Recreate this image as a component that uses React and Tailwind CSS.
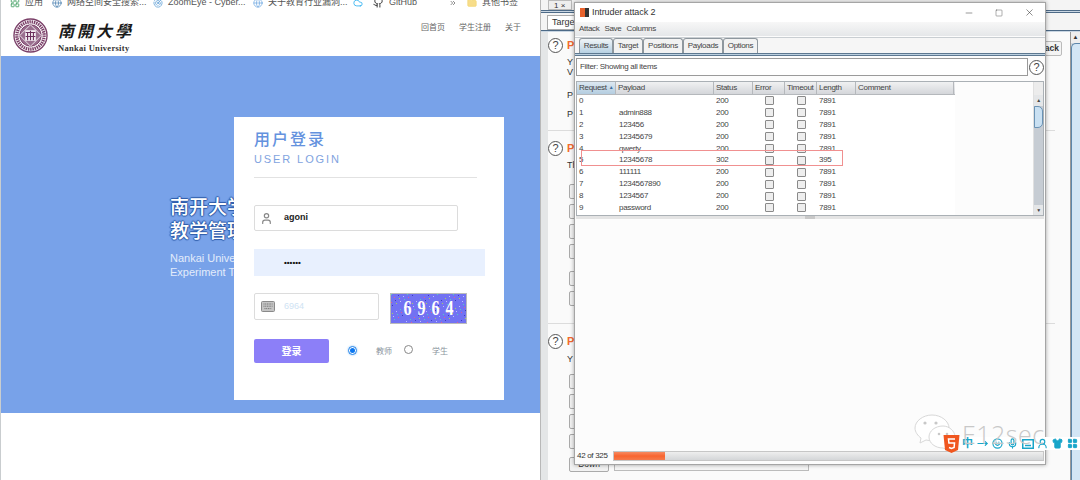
import React from "react";
import { Smile, Mic, UserRound, Shirt, LayoutGrid, Folder, Github, Cloud, Globe, Radar, ChevronsRight, User, Minus, Square, X, MoveRight } from "lucide-react";

const SANS = "font-['Liberation_Sans','Noto_Sans_CJK_SC',sans-serif]";

function Bookmark({ icon, label, w }) {
  return (
    <div className={"flex items-center gap-[5px] shrink-0 " + w}>
      {icon}
      <span className="text-[9px] text-[#555] whitespace-nowrap leading-none">{label}</span>
    </div>
  );
}

function Seal() {
  return (
    <svg width="35" height="35" viewBox="0 0 36 36" className="shrink-0">
      <circle cx="18" cy="18" r="17" fill="#fff" stroke="#7a3f68" strokeWidth="1.4" />
      <circle cx="18" cy="18" r="14" fill="none" stroke="#7a3f68" strokeWidth="3.400" strokeDasharray="1.5 0.8" />
      <circle cx="18" cy="18" r="11" fill="#9a6f8f" stroke="#7a3f68" strokeWidth="1" />
      <path d="M7 18 L18 7 L29 18 L18 29 Z" fill="none" stroke="#fff" strokeWidth="0.800" />
      <rect x="12.500" y="12.500" width="11" height="11" fill="#f3ecf1" />
      <path d="M13 15h10M15 15v8M18 13v10M21 15v8M13 19h10" stroke="#6b2f5c" strokeWidth="1.100" />
    </svg>
  );
}

function KeyboardIcon() {
  return (
    <svg width="14" height="11" viewBox="0 0 14 11">
      <rect x="0.500" y="0.500" width="13" height="10" rx="1" fill="#c4c4c4" stroke="#8a8a8a" />
      <path d="M2.500 3h9M2.500 5.200h9M3.500 7.600h7" stroke="#707070" strokeWidth="1" strokeDasharray="1 0.700" />
    </svg>
  );
}

const noise = Array.from({ length: 120 }, (_, i) => ({
  x: (i * 37) % 76,
  y: (i * 23) % 30,
  c: ["#4fd0c0", "#e05a9a", "#3a3ac0", "#a8d060", "#c0c0ff"][i % 5],
}));

function Captcha() {
  return (
    <div className="relative ml-[11px] w-[77px] h-[31px] border border-[#bbb] bg-[#7272f2] overflow-hidden">
      <svg width="76" height="30" className="absolute left-0 top-0">
        {noise.map((n, i) => <rect key={i} x={n.x} y={n.y} width="1" height="1" fill={n.c} />)}
      </svg>
      <div className="relative h-full flex items-center justify-center gap-[6px] text-white font-bold text-[16px] leading-none font-['Liberation_Serif',serif] scale-y-125">
        <span>6</span><span>9</span><span>6</span><span>4</span>
      </div>
    </div>
  );
}

function LoginCard() {
  return (
    <div className="absolute left-[233px] top-[61px] w-[270px] h-[283px] bg-white pl-[20px] pt-[13px]">
      <div className="text-[16px] leading-[20px] tracking-[2px] font-medium text-[#6492de]">用户登录</div>
      <div className="mt-[2px] text-[11px] leading-[14px] tracking-[1.9px] font-medium text-[#7fa3e0]">USER LOGIN</div>
      <div className="mt-[11px] w-[223px] h-px bg-[#e2e2e2]" />
      <div className="mt-[27px] w-[204px] h-[26px] rounded-[2px] border border-[#dcdcdc] flex items-center pl-[5px]">
        <User size={13} className="text-[#888]" strokeWidth={2.2} />
        <span className="ml-[11px] text-[9px] font-bold text-[#222]">agoni</span>
      </div>
      <div className="mt-[18px] w-[231px] h-[27px] bg-[#e8f0fe] flex items-center pl-[30px]">
        <span className="text-[8px] font-bold text-[#111] leading-none">••••••</span>
      </div>
      <div className="mt-[17px] flex items-start">
        <div className="w-[125px] h-[27px] rounded-[2px] border border-[#dcdcdc] flex items-center pl-[6px]">
          <KeyboardIcon />
          <span className="ml-[9px] text-[9px] text-[#cfe3f3]">6964</span>
        </div>
        <Captcha />
      </div>
      <div className="mt-[15px] flex items-center">
        <div className="w-[75px] h-[24px] rounded-[2px] bg-[#8c7ff8] text-white text-[10px] font-bold flex items-center justify-center">登录</div>
        <span className="ml-[19px] w-[9px] h-[9px] rounded-full border border-[#1a7fe8] flex items-center justify-center -mt-[2px] shadow-[0_0_2px_#7ab8f5]">
          <span className="w-[5px] h-[5px] rounded-full bg-[#0a76f0]" />
        </span>
        <span className="ml-[19px] text-[8px] text-[#8a939c] mt-[2px]">教师</span>
        <span className="ml-[12px] w-[9px] h-[9px] rounded-full border border-[#888] -mt-[3px]" />
        <span className="ml-[19px] text-[8px] text-[#8a939c] mt-[2px]">学生</span>
      </div>
    </div>
  );
}

function LeftPane() {
  return (
    <div className="w-[540px] shrink-0 h-full flex flex-col border-l border-[#c9cdcf] bg-white">
      <div className="h-[8px] overflow-hidden flex items-center pl-[9px] bg-white shrink-0">
        <div className="flex items-center -mt-[3px]">
          <Bookmark w="w-[42px]" icon={<LayoutGrid size={10} className="text-[#3a9a5c]" />} label="应用" />
          <Bookmark w="w-[101px]" icon={<Globe size={10} className="text-[#5b8db8]" />} label="网络空间安全搜索..." />
          <Bookmark w="w-[100px]" icon={<Radar size={10} className="text-[#6aa6d8]" />} label="ZoomEye - Cyber..." />
          <Bookmark w="w-[100px]" icon={<Globe size={10} className="text-[#7fb2e5]" />} label="关于教育行业漏洞..." />
          <Bookmark w="w-[20px]" icon={<Cloud size={10} className="text-[#2db0f0]" />} label="" />
          <Bookmark w="w-[76px]" icon={<Github size={11} className="text-[#222]" />} label="GitHub" />
          <ChevronsRight size={8} className="text-[#555] mr-[10px] shrink-0" />
          <Bookmark w="w-[60px]" icon={<Folder size={10} className="text-[#f3d878]" fill="#f7dd8a" />} label="其他书签" />
        </div>
      </div>
      <div className="h-[48px] flex items-start pl-[12px] pr-[19px] pt-[10px] shrink-0">
        <Seal />
        <div className="ml-[10px] flex flex-col items-start">
          <div className="text-[16px] leading-[24px] font-bold italic tracking-[3px] text-[#1a1a1a] font-['Noto_Sans_CJK_TC',serif]">南開大學</div>
          <div className="mt-[1px] text-[8.500px] leading-[10px] font-bold tracking-[0.300px] text-[#333] font-['Liberation_Serif',serif]">Nankai University</div>
        </div>
        <nav className="ml-auto mt-[4px] flex gap-[14px] text-[8px] text-[#666]">
          <span>回首页</span>
          <span>学生注册</span>
          <span>关于</span>
        </nav>
      </div>
      <div className="relative h-[357px] bg-[#78a2e9] pl-[169px] pt-[140px] overflow-hidden">
        <div className="text-[19px] leading-[24px] font-medium text-white whitespace-nowrap [text-shadow:1px_0_1px_#2c5aa8,-1px_0_1px_#2c5aa8,0_1px_1px_#2c5aa8,0_-1px_1px_#2c5aa8]">南开大学信息安全<br />教学管理系统</div>
        <div className="mt-[7px] text-[11px] leading-[14px] text-[#e3ecfb] whitespace-nowrap">Nankai University<br />Experiment Teaching</div>
        <LoginCard />
      </div>
    </div>
  );
}

function Help() {
  return (
    <span className="w-[15px] h-[15px] rounded-full border border-[#555] bg-white text-[#444] flex items-center justify-center text-[11px] leading-none shrink-0">?</span>
  );
}

function BackBtn({ label, mt }) {
  return <div className={"w-[40px] h-[15px] rounded-[2px] border border-[#aaa] bg-[#f2f2f2] text-[8.500px] leading-none text-[#333] flex items-center justify-center shrink-0 " + mt}>{label}</div>;
}

function SectionHead() {
  return <div className="flex items-center gap-[4px]"><Help /><span className="text-[#f26a2e] font-bold text-[11px] leading-none">P</span></div>;
}

function BurpBehind() {
  return (
    <div className="relative flex-1 h-full min-w-0 bg-[#fafafa] overflow-hidden flex flex-col text-[9px] leading-[10px] text-[#333] border-l border-[#b8b8b8]">
      <div className="h-[10px] bg-[#f4f4f4] flex items-end pl-[7px] gap-[2px] shrink-0">
        <div className="w-[24px] h-[10px] border border-[#bbb] bg-[#eee] text-[8px] pl-[5px] leading-[9px]">1 ×</div>
      </div>
      <div className="h-[3px] border-y border-[#4d6a87] bg-[#c9d6e2] shrink-0" />
      <div className="h-[17px] bg-[#f4f4f4] pl-[6px] pt-[2px] shrink-0">
        <div className="w-[40px] h-[15px] border border-[#aaa] bg-white pl-[4px] leading-[13px]">Target</div>
      </div>
      <div className="h-[2px] border-t border-[#4d6a87] bg-[#c9d6e2] shrink-0" />
      <div className="flex-1 flex flex-row min-h-0">
        <div className="w-[7px] bg-[#e4e6e7] shrink-0" />
        <div className="flex-1 flex flex-col pr-[15px] min-w-0">
          <section className="h-[99px] pt-[6px] border-b border-[#dcdcdc] flex flex-col shrink-0">
            <SectionHead />
            <div className="ml-[19px] mt-[4px]">Y<br />V</div>
            <div className="ml-[19px] mt-[13px]">P</div>
            <div className="ml-[19px] mt-[9px]">P</div>
          </section>
          <section className="h-[193px] pt-[10px] border-b border-[#dcdcdc] flex flex-col shrink-0">
            <SectionHead />
            <div className="ml-[19px] mt-[4px]">Th</div>
            <div className="ml-[21px] flex flex-col">
              <BackBtn label="" mt="mt-[14px]" />
              <BackBtn label="" mt="mt-[5px]" />
              <BackBtn label="" mt="mt-[5px]" />
              <BackBtn label="" mt="mt-[5px]" />
              <BackBtn label="" mt="mt-[12px]" />
              <BackBtn label="A" mt="mt-[5px]" />
            </div>
          </section>
          <section className="pt-[10px] flex flex-col">
            <SectionHead />
            <div className="ml-[19px] mt-[5px]">Y</div>
            <div className="ml-[21px] flex flex-col">
              <BackBtn label="" mt="mt-[10px]" />
              <BackBtn label="" mt="mt-[5px]" />
              <BackBtn label="" mt="mt-[5px]" />
              <BackBtn label="" mt="mt-[5px]" />
              <div className="flex items-center mt-[8px]">
                <BackBtn label="Down" mt="" />
                <div className="ml-[5px] w-[195px] h-[13px] border border-[#bbb] bg-[#f5f5f5] shrink-0" />
              </div>
            </div>
          </section>
        </div>
        <div className="w-[10px] flex flex-col border-l border-[#999] bg-[#cfd6dc] shrink-0">
          <div className="h-[11px] bg-[#eee] text-[6px] text-center leading-[11px]">▲</div>
          <div className="flex-1 rounded-tl-[5px] bg-[#d3e6f5] border-l border-t border-[#5d87ab]" />
        </div>
      </div>
      <div className="absolute right-[18px] top-[41px] w-[34px] h-[15px] rounded-[2px] border border-[#bbb] bg-[#f4f4f4] text-right pr-[2px] text-[8.500px] leading-[13px] font-bold">Back</div>
    </div>
  );
}

const cols = "grid grid-cols-[39px_98px_39px_32px_32px_39px_98px]";
const headers = ["Request", "Payload", "Status", "Error", "Timeout", "Length", "Comment"];
const rows = [
  ["0", "", "200", "7891"],
  ["1", "admin888", "200", "7891"],
  ["2", "123456", "200", "7891"],
  ["3", "12345679", "200", "7891"],
  ["4", "qwerty", "200", "7891"],
  ["5", "12345678", "302", "395"],
  ["6", "111111", "200", "7891"],
  ["7", "1234567890", "200", "7891"],
  ["8", "1234567", "200", "7891"],
  ["9", "password", "200", "7891"],
];

function Check() {
  return <span className="block mx-auto w-[9px] h-[9px] rounded-[1px] border border-[#8a8a8a] bg-[#eeeeee]" />;
}

function AttackWindow() {
  const tabs = ["Results", "Target", "Positions", "Payloads", "Options"];
  const widths = ["w-[34px]", "w-[30px]", "w-[40px]", "w-[40px]", "w-[35px]"];
  return (
    <div className="absolute left-[574px] top-[2px] w-[472px] h-[463px] bg-[#fcfcfc] border border-[#a5a5a5] shadow-[0_0_4px_rgba(0,0,0,0.35)] flex flex-col text-[8px] tracking-[-0.300px] text-[#444]">
      <div className="h-[19px] bg-white flex items-center pl-[5px] pr-[10px] shrink-0">
        <svg width="9" height="9" viewBox="0 0 9 9"><rect width="5" height="9" fill="#e8622c" /><rect x="5" width="4" height="9" fill="#333" /></svg>
        <span className="ml-[3px] text-[9px] tracking-[-0.100px] text-[#333]">Intruder attack 2</span>
        <div className="ml-auto flex items-center gap-[21px] text-[#333]">
          <Minus size={10} strokeWidth={1.200} />
          <Square size={8} strokeWidth={1.200} />
          <X size={11} strokeWidth={1.200} />
        </div>
      </div>
      <div className="h-[14px] bg-gradient-to-b from-[#f7f7f7] to-[#e5e7e9] flex items-center gap-[5px] pl-[4px] shrink-0">
        <span>Attack</span><span>Save</span><span>Columns</span>
      </div>
      <div className="h-[16px] mt-px border-t border-[#c9ced2] bg-[#f6f6f6] flex items-end pl-[4px] shrink-0">
        {tabs.map((t, i) => (
          <div key={t} className={"h-[15px] border border-b-0 border-[#8e979e] rounded-t-[3px] flex items-center justify-center " + widths[i] + (i === 0 ? " bg-gradient-to-b from-[#f0f4f7] to-[#b8d1e3]" : " bg-[#f2f2f2]")}>{t}</div>
        ))}
      </div>
      <div className="h-[3px] border-y border-[#5d7890] bg-[#bcd0e0] shrink-0" />
      <div className="mt-[2px] flex items-center pl-[1px] pr-[1px] shrink-0">
        <div className="flex-1 h-[18px] border border-[#9a9a9a] bg-white flex items-center pl-[3px]">Filter: Showing all items</div>
        <span className="ml-[1px] w-[15px] h-[15px] rounded-full border border-[#555] bg-white flex items-center justify-center text-[11px] leading-none">?</span>
      </div>
      <div className="mt-[5px] mx-[1px] h-[135px] border border-[#aab0b5] bg-white flex shrink-0">
        <div className="flex-1 min-w-0 flex bg-[#fcfcfc]">
          <div className="w-[378px] bg-white">
            <div className={cols + " h-[13px] bg-gradient-to-b from-[#f0f1f2] to-[#d4d6da] border-b border-[#b5b8bc]"}>
              {headers.map((h, i) => (
                <div key={h} className={"flex items-center pl-[2px] whitespace-nowrap border-r border-[#b5b8bc] " + (i === 0 ? "bg-gradient-to-b from-[#dce8f1] to-[#b4cde0]" : "")}>
                  {h}
                  {i === 0 && <span className="ml-[2px] text-[5px] text-[#3f6f9f]">▲</span>}
                </div>
              ))}
            </div>
            {rows.map((r) => (
              <div key={r[0]} className={cols + " h-[11.900px] items-center leading-none"}>
                <div className="pl-[2px]">{r[0]}</div>
                <div className="pl-[3px]">{r[1]}</div>
                <div className="pl-[2px]">{r[2]}</div>
                <Check />
                <Check />
                <div className="pl-[2px]">{r[3]}</div>
                <div />
              </div>
            ))}
          </div>
        </div>
        <div className="w-[10px] shrink-0 flex flex-col bg-[#c6ccd3] border-l border-[#e0e0e0]">
          <div className="h-[13px] bg-[#ececec]" />
          <div className="h-[11px] bg-[#e4e6e8] text-[5px] text-center leading-[11px]">▲</div>
          <div className="h-[22px] rounded-r-[5px] bg-[#c9e0f2] border border-[#6a93b5]" />
          <div className="flex-1" />
          <div className="h-[10px] bg-[#e4e6e8] text-[5px] text-center leading-[10px]">▼</div>
        </div>
      </div>
      <div className="h-[3px] mx-[1px] bg-[#e4e4e4] shrink-0 flex justify-center">
        <div className="w-[10px] bg-[#c8c8c8]" />
      </div>
      <div className="flex-1" />
      <div className="h-[12px] flex items-center pl-[2px] pr-[1px] mb-[2px] shrink-0">
        <span className="w-[36px] shrink-0 whitespace-nowrap text-[#333]">42 of 325</span>
        <div className="flex-1 h-[10px] bg-gradient-to-b from-[#eeeeee] to-[#d4d6d8] border border-[#c6c6c6]">
          <div className="h-full bg-gradient-to-b from-[#f58a60] via-[#f8642e] to-[#f47a4c]" style={{ width: "11.800%" }} />
        </div>
      </div>
    </div>
  );
}

function KeyboardTeal() {
  return (
    <svg width="12" height="10" viewBox="0 0 12 10">
      <rect x="0.750" y="0.750" width="10.500" height="8.500" fill="none" stroke="currentColor" strokeWidth="1.500" />
      <path d="M3 6.500h6" stroke="currentColor" strokeWidth="1.500" />
    </svg>
  );
}

function Watermark() {
  const item = "w-[15px] shrink-0 flex justify-center";
  return (
    <div className="absolute left-[913px] top-[414px] w-[167px] h-[50px]">
      <svg width="46" height="36" viewBox="0 0 46 36" className="absolute left-[1px] top-0">
        <path d="M18 1C9 1 1 7 1 14c0 4 3 8 6 10l-1 5 6-3c2 .5 4 .6 6 .6C27 26.600 35 21 35 14 35 7 27 1 18 1Z" fill="#fff" stroke="#d8d8d8" />
        <circle cx="11" cy="9" r="1.600" fill="#c8c8c8" /><circle cx="22" cy="9" r="1.600" fill="#c8c8c8" />
        <path d="M29 12c-8 0-14 5-14 11s6 11 14 11l6 2-1-4c4-2 7-5 7-9 0-6-6-11-12-11Z" fill="#fff" stroke="#d8d8d8" />
        <circle cx="25" cy="20" r="1.300" fill="#c8c8c8" /><circle cx="33" cy="20" r="1.300" fill="#c8c8c8" />
      </svg>
      <div className="absolute left-[47px] top-[23px] w-[120px] h-[13px] bg-white flex items-center text-[#18a5c9]">
        <span className={item + " text-[11px] font-bold leading-none"}>中</span>
        <span className={item}><MoveRight size={11} strokeWidth={2.500} /></span>
        <span className={item}><Smile size={11} strokeWidth={2.500} /></span>
        <span className={item}><Mic size={11} strokeWidth={2.500} /></span>
        <span className={item}><KeyboardTeal /></span>
        <span className={item}><UserRound size={11} strokeWidth={2.500} /></span>
        <span className={item}><Shirt size={11} fill="currentColor" /></span>
        <span className={item}><LayoutGrid size={11} fill="currentColor" /></span>
      </div>
      <svg width="17" height="18" viewBox="0 0 16 18" className="absolute left-[30px] top-[21px]">
        <path d="M0 0h16l-1.500 15L8 18l-6.500-3Z" fill="#f0561f" />
        <path d="M11.500 4H5l.4 4h5.600l-.4 4.500L8 13.500 5.500 12.500" fill="none" stroke="#fff" strokeWidth="1.500" />
      </svg>
      <span className="absolute left-[49px] top-[6px] text-[25px] leading-[28px] tracking-[0.500px] text-[#c8c8c8] whitespace-nowrap font-['Open_Sans',sans-serif] font-light">E12sec</span>
    </div>
  );
}

export default function App() {
  return (
    <div className={"relative w-[1080px] h-[480px] overflow-hidden flex bg-white " + SANS}>
      <LeftPane />
      <BurpBehind />
      <AttackWindow />
      <div className="absolute left-[581px] top-[150px] w-[262px] h-[16px] border border-[#f09090]" />
      <Watermark />
    </div>
  );
}
